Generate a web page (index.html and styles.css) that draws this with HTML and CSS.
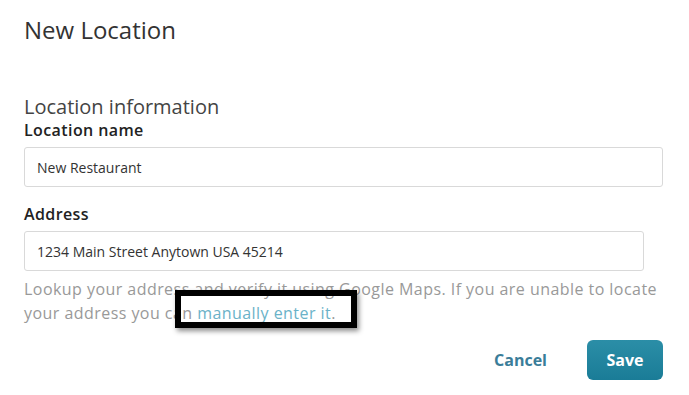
FILE: index.html
```html
<!DOCTYPE html>
<html lang="en">
<head>
  <meta charset="UTF-8" />
  <meta name="viewport" content="width=device-width, initial-scale=1.0" />
  <title>New Location</title>
  <link rel="stylesheet" href="styles.css">
</head>
<body>

<!-- new location form -->
<div class="modal">
  <h1 class="title">New Location</h1>

  <h2 class="section">Location information</h2>

  <div class="field">
    <label class="label" for="locName">Location name</label>
    <input class="text-input" id="locName" type="text" value="New Restaurant" />
  </div>

  <div class="field field-address">
    <label class="label" for="locAddress">Address</label>
    <div class="address-row">
      <input class="text-input" id="locAddress" type="text" value="1234 Main Street Anytown USA 45214" />
    </div>
    <p class="help">
      Lookup your address and verify it using Google Maps. If you are unable to locate
      your address you can <a class="link" href="#">manually enter it</a>.
      <span class="highlight"></span>
    </p>
  </div>

  <div class="actions">
    <button class="btn btn-cancel" type="button">Cancel</button>
    <button class="btn btn-save" type="button">Save</button>
  </div>
</div>

</body>
</html>
```

FILE: styles.css
```css
body {
  margin: 0;
  font-family: "Open Sans", "Liberation Sans", sans-serif;
  background: #fff;
}

.modal {
  padding: 15px 26px 0 24px;
}

.title {
  margin: 0;
  font-size: 24px;
  line-height: 30px;
  font-weight: 400;
  color: #333;
}

.section {
  margin: 49px 0 0;
  font-size: 20px;
  line-height: 26px;
  font-weight: 400;
  color: #444;
}

.label {
  display: block;
  font-size: 16px;
  line-height: 20px;
  font-weight: 600;
  letter-spacing: 0.4px;
  color: #222;
  margin-bottom: 7px;
}

.field-address {
  margin-top: 17px;
}

.text-input {
  display: block;
  box-sizing: border-box;
  width: 100%;
  height: 40px;
  padding: 0 12px;
  border: 1px solid #d9d9d9;
  border-radius: 3px;
  font-family: inherit;
  font-size: 14px;
  color: #333;
  background: #fff;
}

.address-row {
  margin-right: 19px;
}

.help {
  position: relative;
  margin: 6px 0 0;
  font-size: 16px;
  line-height: 24px;
  letter-spacing: 0.45px;
  color: #999;
}

.link {
  color: #6ab2c8;
  text-decoration: none;
}

/* annotation box drawn over the help text */
.highlight {
  position: absolute;
  left: 151px;
  top: 13px;
  width: 182px;
  height: 38px;
  box-sizing: border-box;
  border: 6px solid #000;
  box-shadow: 2px 3px 5px rgba(0,0,0,0.45);
}

.actions {
  margin-top: 15px;
  display: flex;
  justify-content: flex-end;
  align-items: center;
  gap: 40px;
}

.btn {
  font-family: inherit;
  font-size: 16px;
  font-weight: 700;
  border: none;
  cursor: pointer;
}

.btn-cancel {
  background: none;
  color: #3a7d99;
  padding: 0;
}

.btn-save {
  width: 76px;
  height: 40px;
  border-radius: 6px;
  color: #fff;
  background: linear-gradient(#2b8ea7, #1a7c97);
}
```
